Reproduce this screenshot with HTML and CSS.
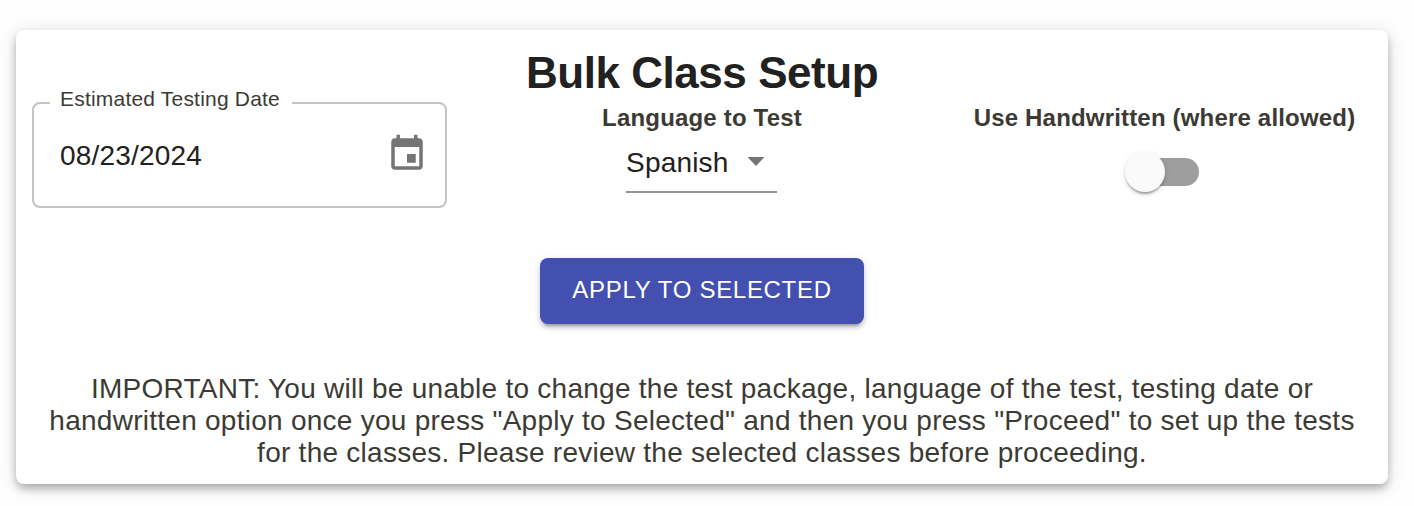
FILE: index.html
```html
<!DOCTYPE html>
<html lang="en">
<head>
<meta charset="utf-8">
<title>Bulk Class Setup</title>
<link rel="stylesheet" href="styles.css">
</head>
<body>
<main class="card">
  <div class="fields">
    <fieldset class="date-field">
      <legend class="date-label">Estimated Testing Date</legend>
      <div class="date-row">
        <span class="date-value">08/23/2024</span>
        <svg class="date-icon" viewBox="0 0 24 24"><path d="M17 12h-5v5h5v-5zM16 1v2H8V1H6v2H5c-1.11 0-1.99.9-1.99 2L3 19c0 1.1.89 2 2 2h14c1.1 0 2-.9 2-2V5c0-1.1-.9-2-2-2h-1V1h-2zm3 18H5V8h14v11z"/></svg>
      </div>
    </fieldset>
    <div class="language">
      <h1 class="title">Bulk Class Setup</h1>
      <div class="label">Language to Test</div>
      <div class="select">
        <span class="select-value">Spanish</span>
        <svg class="select-arrow" viewBox="0 0 18 9"><path d="M0.5 0h17L9 9z"/></svg>
      </div>
    </div>
    <div class="handwritten">
      <div class="label">Use Handwritten (where allowed)</div>
      <div class="switch"><span class="thumb"></span></div>
    </div>
  </div>
  <button class="apply" type="button">APPLY TO SELECTED</button>
  <p class="notice">
    <span class="line">IMPORTANT: You will be unable to change the test package, language of the test, testing date or</span>
    <span class="line">handwritten option once you press "Apply to Selected" and then you press "Proceed" to set up the tests</span>
    <span class="line">for the classes. Please review the selected classes before proceeding.</span>
  </p>
</main>
</body>
</html>
```
FILE: styles.css
```css
* { box-sizing: border-box; }

body {
  margin: 0;
  padding: 30px 26px 0 16px;
  height: 506px;
  overflow: hidden;
  background: #fefefe;
  color: #3c3a34;
  font-family: "Liberation Sans", Arial, sans-serif;
}

.card {
  display: flex;
  flex-direction: column;
  align-items: center;
  height: 454px;
  background: #fff;
  border-radius: 8px;
  box-shadow: 0 4px 8px -2px rgba(0,0,0,.2), 0 6px 10px rgba(0,0,0,.14), 0 2px 20px rgba(0,0,0,.12);
}

.fields {
  display: grid;
  grid-template-columns: 415px 1fr 415px;
  width: 100%;
  height: 228px;
  padding: 0 16px;
}

.date-field {
  margin: 55px 0 0;
  padding: 0 22px 0 16px;
  height: 123px;
  border: 2px solid #c4c4c4;
  border-radius: 8px;
}

.date-label {
  padding: 0 12px 8px 10px;
  font-size: 21px;
  line-height: 28px;
  letter-spacing: .2px;
  white-space: nowrap;
}

.date-row {
  display: flex;
  align-items: center;
  justify-content: space-between;
  padding: 12px 0 0 10px;
}

.date-value {
  color: #212121;
  font-size: 28px;
  line-height: 46px;
  letter-spacing: .2px;
}

.date-icon {
  width: 42px;
  height: 42px;
  margin: -4px -5px 0 0;
  fill: #757575;
}

.language,
.handwritten {
  display: flex;
  flex-direction: column;
  align-items: center;
}

.title {
  margin: 17px 0 0;
  color: #212121;
  font-size: 44px;
  line-height: 52px;
  letter-spacing: -.45px;
}

.label {
  height: 36px;
  font-size: 24px;
  font-weight: bold;
  line-height: 37px;
  letter-spacing: .18px;
  white-space: nowrap;
}

.select {
  display: flex;
  align-items: center;
  justify-content: space-between;
  width: 151px;
  height: 58px;
  margin-right: 1px;
  padding: 0 12px 0 0;
  border-bottom: 2px solid #949494;
}

.select-value {
  color: #212121;
  font-size: 28px;
  letter-spacing: .2px;
}

.select-arrow {
  width: 18px;
  height: 9px;
  margin-top: -3px;
  fill: #757575;
}

.handwritten { padding: 69px 0 0 0; }

.switch {
  display: flex;
  align-items: center;
  width: 68px;
  height: 28px;
  margin: 23px 0 0 0;
  border-radius: 14px;
  background: #9e9e9e;
}

.thumb {
  flex: none;
  width: 40px;
  height: 40px;
  margin-left: -6px;
  border-radius: 50%;
  background: #fafafa;
  box-shadow: 0 4px 2px -2px rgba(0,0,0,.2), 0 2px 2px rgba(0,0,0,.14), 0 2px 6px rgba(0,0,0,.12);
}

.apply {
  flex: none;
  width: 324px;
  height: 66px;
  padding: 0 0 3px;
  border: 0;
  border-radius: 8px;
  background: #4450b0;
  color: #fff;
  font-family: inherit;
  font-size: 24px;
  letter-spacing: .69px;
  box-shadow: 0 6px 2px -4px rgba(0,0,0,.2), 0 4px 4px rgba(0,0,0,.14), 0 2px 10px rgba(0,0,0,.12);
}

.notice {
  margin: 49px 0 0;
  font-size: 28px;
  line-height: 32px;
  letter-spacing: .26px;
  text-align: center;
}

.line {
  display: block;
  white-space: nowrap;
}
```
